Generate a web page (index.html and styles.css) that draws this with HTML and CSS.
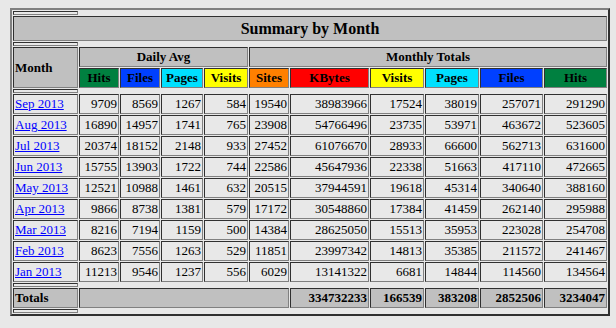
FILE: index.html
```html
<!DOCTYPE html>
<html lang="en">
<head>
  <meta charset="UTF-8">
  <title>Summary by Month</title>
  <link rel="stylesheet" href="styles.css">
</head>
<body>
  <table class="summary">
    <colgroup>
      <col class="w-month">
      <col class="w-40"><col class="w-40"><col class="w-42"><col class="w-44">
      <col class="w-40"><col class="w-79"><col class="w-54"><col class="w-54"><col class="w-63"><col class="w-63">
    </colgroup>
    <tr><th class="spacer"></th></tr>
    <tr><th colspan="11" class="title">Summary by Month</th></tr>
    <tr><th class="spacer"></th></tr>
    <tr>
      <th rowspan="2" class="gray left">Month</th>
      <th colspan="4" class="gray">Daily Avg</th>
      <th colspan="6" class="gray">Monthly Totals</th>
    </tr>
    <tr>
      <th class="c-hits">Hits</th>
      <th class="c-files">Files</th>
      <th class="c-pages">Pages</th>
      <th class="c-visits">Visits</th>
      <th class="c-sites">Sites</th>
      <th class="c-kbytes">KBytes</th>
      <th class="c-visits">Visits</th>
      <th class="c-pages">Pages</th>
      <th class="c-files">Files</th>
      <th class="c-hits">Hits</th>
    </tr>
    <tr><th class="spacer"></th></tr>
    <tr><td class="month"><a href="#">Sep 2013</a></td><td>9709</td><td>8569</td><td>1267</td><td>584</td><td>19540</td><td>38983966</td><td>17524</td><td>38019</td><td>257071</td><td>291290</td></tr>
    <tr><td class="month"><a href="#">Aug 2013</a></td><td>16890</td><td>14957</td><td>1741</td><td>765</td><td>23908</td><td>54766496</td><td>23735</td><td>53971</td><td>463672</td><td>523605</td></tr>
    <tr><td class="month"><a href="#">Jul 2013</a></td><td>20374</td><td>18152</td><td>2148</td><td>933</td><td>27452</td><td>61076670</td><td>28933</td><td>66600</td><td>562713</td><td>631600</td></tr>
    <tr><td class="month"><a href="#">Jun 2013</a></td><td>15755</td><td>13903</td><td>1722</td><td>744</td><td>22586</td><td>45647936</td><td>22338</td><td>51663</td><td>417110</td><td>472665</td></tr>
    <tr><td class="month"><a href="#">May 2013</a></td><td>12521</td><td>10988</td><td>1461</td><td>632</td><td>20515</td><td>37944591</td><td>19618</td><td>45314</td><td>340640</td><td>388160</td></tr>
    <tr><td class="month"><a href="#">Apr 2013</a></td><td>9866</td><td>8738</td><td>1381</td><td>579</td><td>17172</td><td>30548860</td><td>17384</td><td>41459</td><td>262140</td><td>295988</td></tr>
    <tr><td class="month"><a href="#">Mar 2013</a></td><td>8216</td><td>7194</td><td>1159</td><td>500</td><td>14384</td><td>28625050</td><td>15513</td><td>35953</td><td>223028</td><td>254708</td></tr>
    <tr><td class="month"><a href="#">Feb 2013</a></td><td>8623</td><td>7556</td><td>1263</td><td>529</td><td>11851</td><td>23997342</td><td>14813</td><td>35385</td><td>211572</td><td>241467</td></tr>
    <tr><td class="month"><a href="#">Jan 2013</a></td><td>11213</td><td>9546</td><td>1237</td><td>556</td><td>6029</td><td>13141322</td><td>6681</td><td>14844</td><td>114560</td><td>134564</td></tr>
    <tr><th class="spacer"></th></tr>
    <tr>
      <th class="gray left">Totals</th>
      <th colspan="5" class="gray">&nbsp;</th>
      <th class="gray right">334732233</th>
      <th class="gray right">166539</th>
      <th class="gray right">383208</th>
      <th class="gray right">2852506</th>
      <th class="gray right">3234047</th>
    </tr>
    <tr><th class="spacer"></th></tr>
  </table>
</body>
</html>
```

FILE: styles.css
```css
body {
    margin: 8px 6px 0 10px;
    background-color: #e8e8e8;
    font-family: 'Liberation Serif', serif;
    color: #000;
}

.summary {
    width: 600px;
    table-layout: fixed;
    border-collapse: separate;
    border-spacing: 1px;
    border: 2px solid;
    border-color: #808080 #303030 #303030 #808080;
}

.w-month { width: 65px; }
.w-40 { width: 40px; }
.w-42 { width: 42px; }
.w-44 { width: 44px; }
.w-54 { width: 54px; }
.w-63 { width: 63px; }
.w-79 { width: 79px; }

.summary th,
.summary td {
    border: 1px solid;
    border-color: #303030 #808080 #808080 #303030;
    padding: 1px;
    font-size: 13px;
    line-height: 16px;
    height: 16px;
    white-space: nowrap;
    overflow: hidden;
}

.summary td {
    text-align: right;
}

.summary .spacer {
    height: 2px;
    padding: 0;
    line-height: 0;
}

.summary .title {
    background-color: #c0c0c0;
    font-size: 16px;
    line-height: 21px;
    height: 21px;
    text-align: center;
}

.gray {
    background-color: #c0c0c0;
    text-align: center;
}

.summary .left {
    text-align: left;
}

.summary .right {
    text-align: right;
}

.summary .month {
    text-align: left;
}

.month a {
    color: #0000ff;
}

.c-hits { background-color: #008040; }
.c-files { background-color: #0040ff; }
.c-pages { background-color: #00e0ff; }
.c-visits { background-color: #ffff00; }
.c-sites { background-color: #ff8000; }
.c-kbytes { background-color: #ff0000; }
```
